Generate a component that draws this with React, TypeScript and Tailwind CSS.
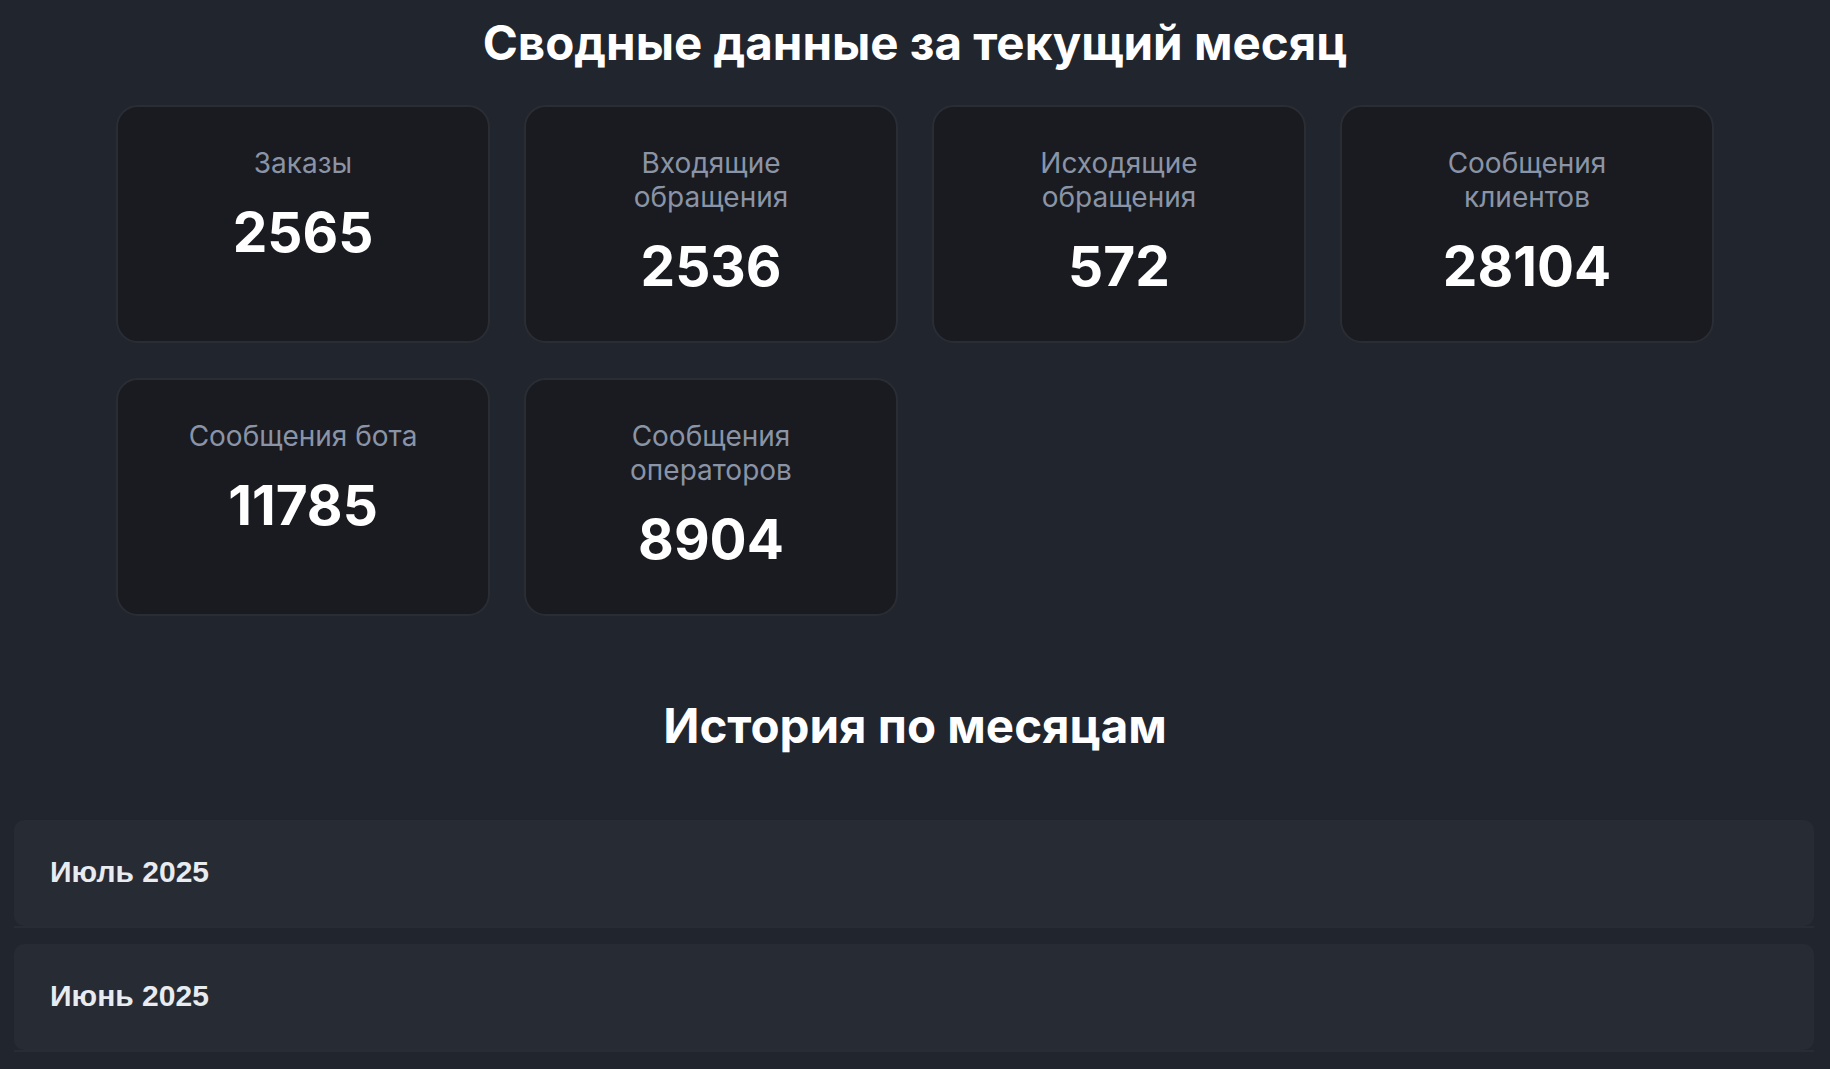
const stats = [
  { label: "Заказы", value: 2565 },
  { label: "Входящие обращения", value: 2536 },
  { label: "Исходящие обращения", value: 572 },
  { label: "Сообщения клиентов", value: 28104 },
  { label: "Сообщения бота", value: 11785 },
  { label: "Сообщения операторов", value: 8904 },
];

const months = ["Июль 2025", "Июнь 2025"];

function StatCard({ label, value }: { label: string; value: number }) {
  return (
    <div className="rounded-[22px] border-2 border-[#2a2d34] bg-[#191b20] px-[56px] py-[39px] text-center">
      <div className="text-[28px] leading-[34px] text-[#8a94a6]">{label}</div>
      <div className="mt-4 text-[55px] font-bold leading-[72px] text-white">{value}</div>
    </div>
  );
}

export default function App() {
  return (
    <div
      className="min-h-screen bg-[#21252d] pt-[14px] pb-6"
      style={{ fontFamily: "Inter, 'Noto Sans', sans-serif" }}
    >
      <h1 className="text-center text-[47.5px] font-bold leading-[58px] text-white">
        Сводные данные за текущий месяц
      </h1>

      {/* Current month stats */}
      <div className="mx-auto mt-[33px] grid w-[1598px] grid-cols-4 gap-x-[34px] gap-y-[35px]">
        {stats.map((s) => (
          <StatCard key={s.label} label={s.label} value={s.value} />
        ))}
      </div>

      <h2 className="mt-[81px] text-center text-[47.5px] font-bold leading-[58px] text-white">
        История по месяцам
      </h2>

      {/* Monthly history */}
      <div className="mt-[65px] flex flex-col gap-4 pl-[14px] pr-[16px]">
        {months.map((m) => (
          <div key={m} className="border-b-2 border-[#282c34]">
            <div
              className="flex h-[106px] items-center rounded-[10px] bg-[#272b34] pb-[3px] pl-[36px] text-[30px] font-bold text-[#e8ebf0]"
              style={{ fontFamily: "'Liberation Sans', Arial, sans-serif" }}
            >
              {m}
            </div>
          </div>
        ))}
      </div>
    </div>
  );
}
